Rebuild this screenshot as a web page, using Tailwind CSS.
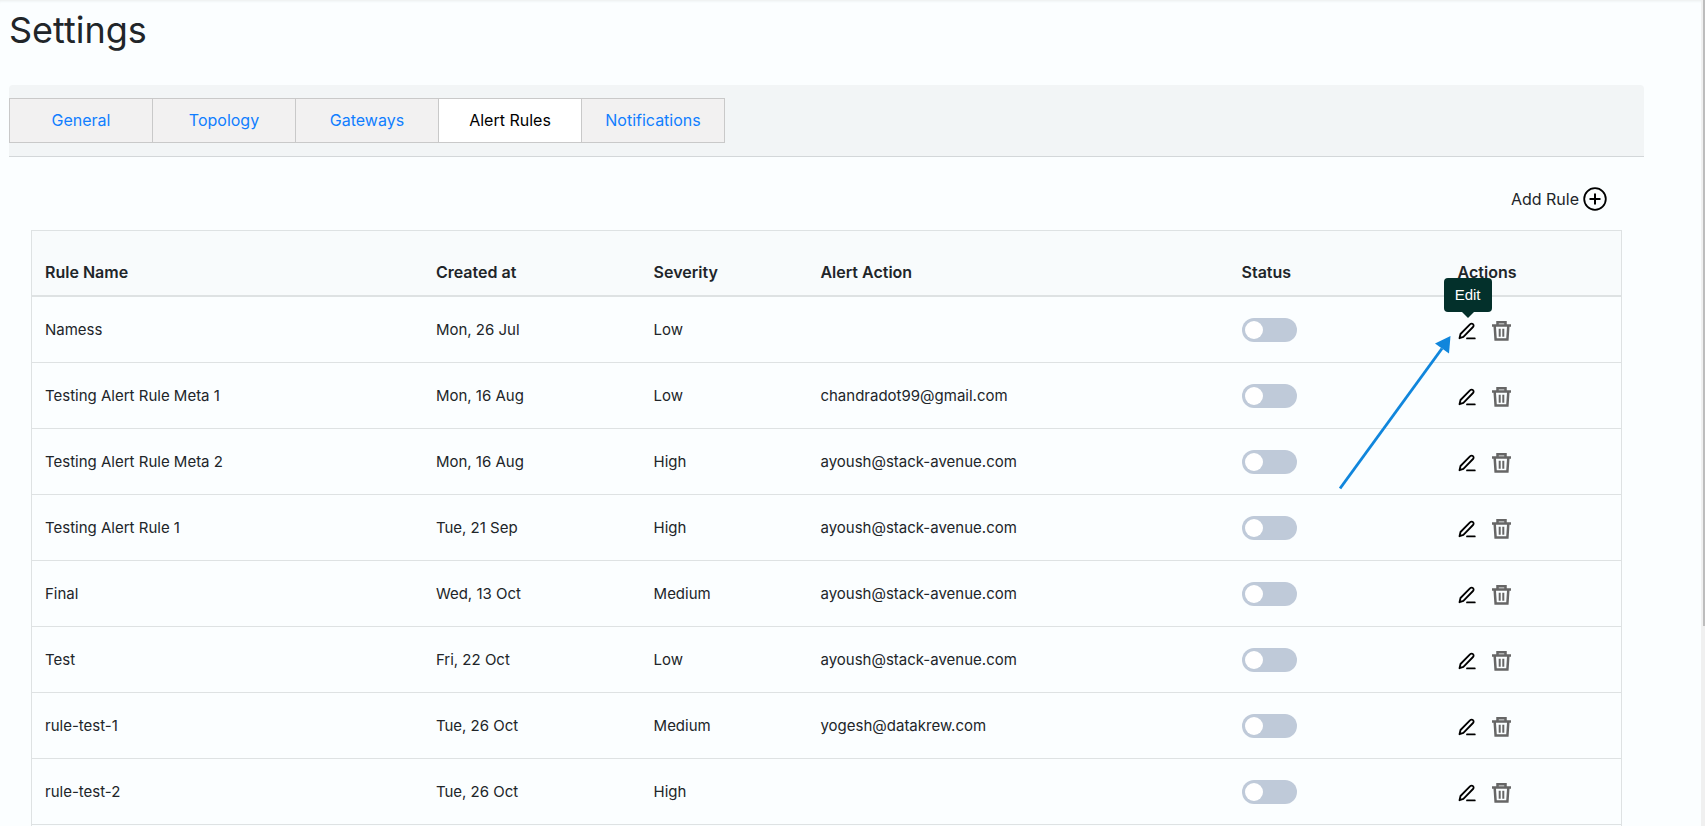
<!DOCTYPE html>
<html lang="en">
<head>
  <meta charset="UTF-8">
  <meta name="viewport" content="width=device-width, initial-scale=1.0">
  <title>Settings | Alert Rules</title>
  <script src="https://cdn.jsdelivr.net/npm/@tailwindcss/browser@4"></script>
</head>
<body class="bg-[#fbfeff] text-[#212529] font-['Inter',sans-serif] text-base">
<div class="flex h-screen overflow-hidden">
  <main class="flex flex-col flex-1 min-w-0 pl-[9px] pr-[57px] shadow-[inset_0_3px_3px_-2px_#e9eded]">
    <h1 class="text-4xl leading-10 pt-[10px]">Settings</h1>

    <nav class="flex mt-[35px] py-[13px] bg-[#f2f5f6] border-b border-[#d3d7d9] rounded-t">
      <a class="w-36 h-[45px] leading-[43px] text-center border border-[#c9c9c9] bg-[#f2f1f1] text-[#107eff]" href="#general">General</a>
      <a class="w-36 h-[45px] leading-[43px] text-center border border-[#c9c9c9] bg-[#f2f1f1] text-[#107eff] -ml-px" href="#topology">Topology</a>
      <a class="w-36 h-[45px] leading-[43px] text-center border border-[#c9c9c9] bg-[#f2f1f1] text-[#107eff] -ml-px" href="#gateways">Gateways</a>
      <a class="w-36 h-[45px] leading-[43px] text-center border border-[#c9c9c9] bg-white text-black -ml-px" href="#alert-rules" aria-current="page">Alert Rules</a>
      <a class="w-36 h-[45px] leading-[43px] text-center border border-[#c9c9c9] bg-[#f2f1f1] text-[#107eff] -ml-px" href="#notifications">Notifications</a>
    </nav>

    <div class="flex justify-end mt-[29px] mb-[18px] pr-[37px]">
      <button type="button" class="flex items-center gap-1 h-[26px]">
        Add Rule
        <svg class="w-6 h-6" viewBox="0 0 24 24" fill="none" stroke="#000" stroke-width="2" aria-hidden="true">
          <circle cx="12" cy="12" r="10.8" stroke-width="1.8"/>
          <path d="M12 6.5v11M6.5 12h11"/>
        </svg>
      </button>
    </div>

    <div class="flex-1 ml-[22px] mr-[22px] border border-b-0 border-[#dee2e3]">
      <table class="w-full table-fixed border-collapse text-left">
        <thead>
          <tr class="h-[65px] bg-[#f8fbfc] border-b-2 border-[#dee2e3]">
            <th class="w-[24.6%] px-[13px] pt-[18px] font-semibold">Rule Name</th>
            <th class="w-[13.7%] px-[13px] pt-[18px] font-semibold">Created at</th>
            <th class="w-[10.5%] px-[13px] pt-[18px] font-semibold">Severity</th>
            <th class="w-[26.5%] px-[13px] pt-[18px] font-semibold">Alert Action</th>
            <th class="w-[13.6%] px-[13px] pt-[18px] font-semibold">Status</th>
            <th class="px-[13px] pt-[18px] font-semibold">Actions</th>
          </tr>
        </thead>
        <tbody id="rules"></tbody>
      </table>
    </div>
  </main>

  <!-- scrollbar -->
  <div class="w-1 pl-0.5 bg-[#f0f0f0]" aria-hidden="true">
    <div class="h-[626px] max-h-full bg-[#bdbdbd]"></div>
  </div>
</div>

<script>
const rules = [
  { name: 'Namess', created: 'Mon, 26 Jul', severity: 'Low', action: '' },
  { name: 'Testing Alert Rule Meta 1', created: 'Mon, 16 Aug', severity: 'Low', action: 'chandradot99@gmail.com' },
  { name: 'Testing Alert Rule Meta 2', created: 'Mon, 16 Aug', severity: 'High', action: 'ayoush@stack-avenue.com' },
  { name: 'Testing Alert Rule 1', created: 'Tue, 21 Sep', severity: 'High', action: 'ayoush@stack-avenue.com' },
  { name: 'Final', created: 'Wed, 13 Oct', severity: 'Medium', action: 'ayoush@stack-avenue.com' },
  { name: 'Test', created: 'Fri, 22 Oct', severity: 'Low', action: 'ayoush@stack-avenue.com' },
  { name: 'rule-test-1', created: 'Tue, 26 Oct', severity: 'Medium', action: 'yogesh@datakrew.com' },
  { name: 'rule-test-2', created: 'Tue, 26 Oct', severity: 'High', action: '' },
];

// tooltip and pointer on the first edit button
const hint = `
  <span role="tooltip" class="absolute left-1/2 bottom-full -translate-x-1/2 mb-[10px] w-12 h-[34px] leading-[34px] rounded bg-[#03302b] text-white text-[15px] text-center font-['Liberation_Sans',sans-serif]">Edit
    <svg class="absolute top-full left-[18px] w-3 h-[6px]" viewBox="0 0 12 6" fill="#03302b" aria-hidden="true"><path d="M0 0h12L6 6z"/></svg>
  </span>
  <svg class="absolute right-full top-[14px] mr-[7px] w-[112px] h-[154px] max-w-none z-10 pointer-events-none" viewBox="0 0 112 154" aria-hidden="true">
    <path d="M1 152.500L103 12.500" stroke="#1086dc" stroke-width="2.900" fill="none"/>
    <path d="M111.500 0L96 7.500l14 10z" fill="#1086dc"/>
  </svg>`;

document.getElementById('rules').innerHTML = rules.map((r, i) => `
  <tr class="h-[66px] border-b border-[#dee2e3]">
    <td class="px-[13px] pt-0.5 text-[15px]">${r.name}</td>
    <td class="px-[13px] pt-0.5 text-[15px]">${r.created}</td>
    <td class="px-[13px] pt-0.5 text-[15px]">${r.severity}</td>
    <td class="px-[13px] pt-0.5 text-[15px]">${r.action}</td>
    <td class="px-[13px] pt-0.5">
      <input type="checkbox" role="switch" aria-label="Status of ${r.name}" class="block appearance-none w-[55px] h-6 rounded-full bg-[#bfcad9] p-[3px] before:block before:w-[18px] before:h-[18px] before:rounded-full before:bg-white checked:bg-[#107eff] checked:before:translate-x-[31px]">
    </td>
    <td class="px-[13px]">
      <div class="flex items-center gap-[14px] pt-[3px]">
        <div class="relative">
          <button type="button" class="block w-5" aria-label="Edit ${r.name}">
            <svg class="w-[18px] h-[18px]" viewBox="0 0 18 18" fill="none" stroke="#000" stroke-width="1.800" stroke-linecap="round" stroke-linejoin="round" aria-hidden="true">
              <path d="M1.500 16.200l1-4.200L12.200 2.200a1.900 1.900 0 0 1 2.800 0a1.900 1.900 0 0 1 0 2.800L5.400 14.800zM9 16.400h7.800"/>
            </svg>
          </button>
          ${i === 0 ? hint : ''}
        </div>
        <button type="button" class="block" aria-label="Delete ${r.name}">
          <svg class="w-[19px] h-5" viewBox="0 0 19 20" fill="none" stroke="#666" stroke-width="2.500" aria-hidden="true">
            <path d="M0 4.500h19M5.500 4V1.300h8V4M2.700 5l.9 13.600h11.800L16.300 5"/>
            <path d="M7.700 7.800v8M11.300 7.800v8" stroke-width="2"/>
          </svg>
        </button>
      </div>
    </td>
  </tr>`).join('');
</script>
</body>
</html>
